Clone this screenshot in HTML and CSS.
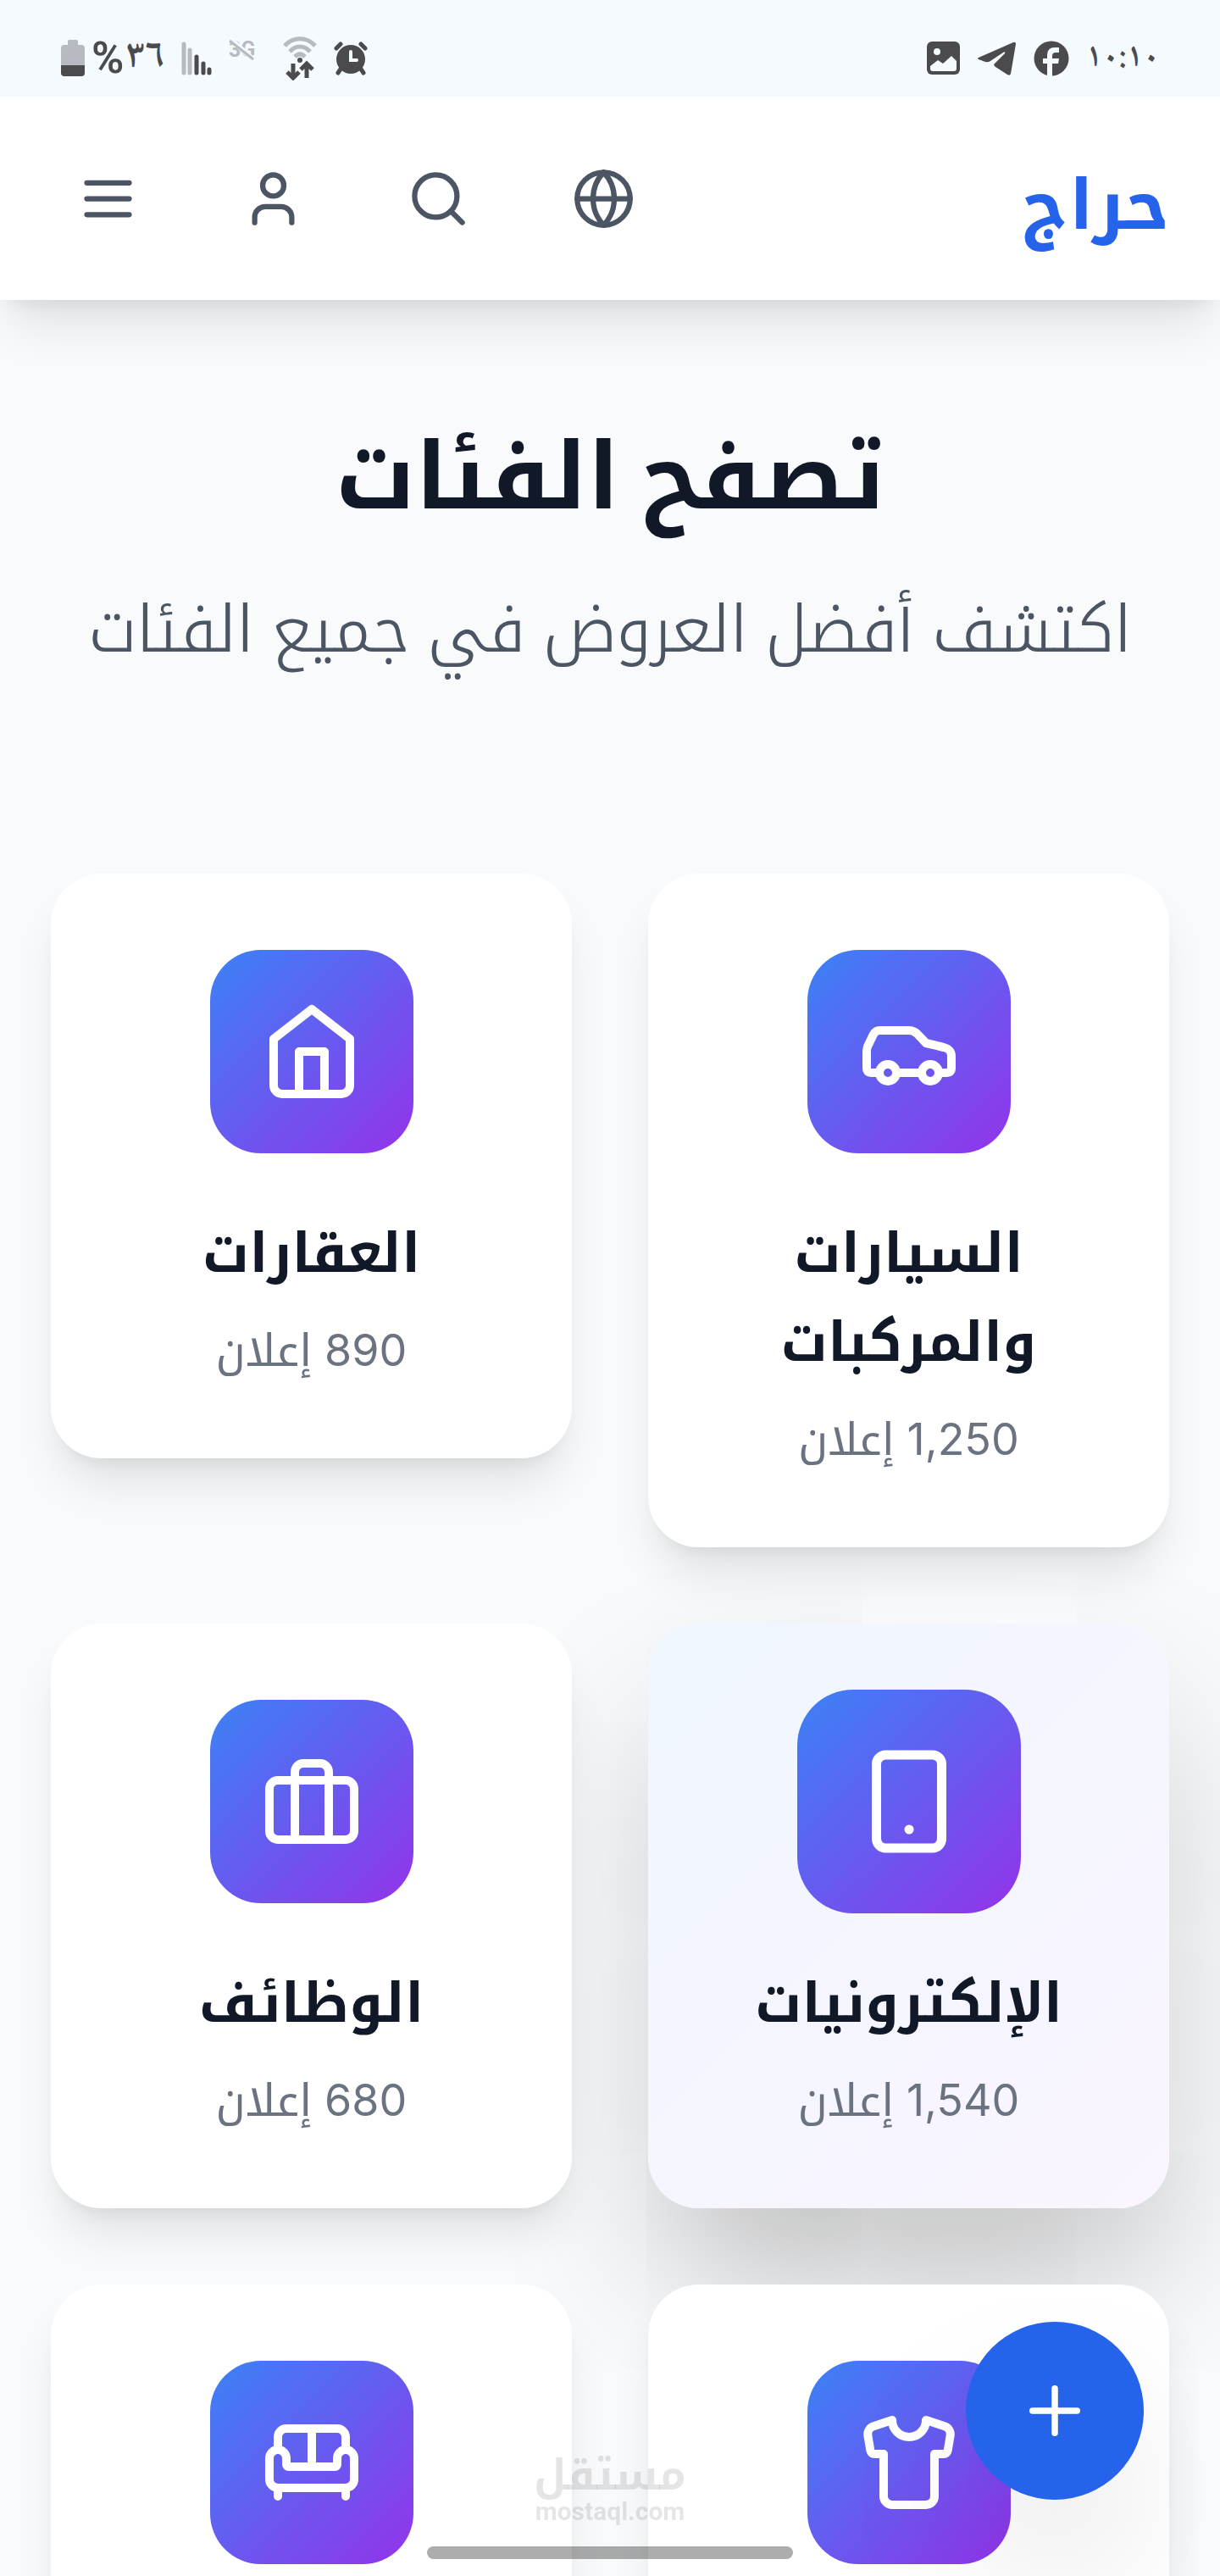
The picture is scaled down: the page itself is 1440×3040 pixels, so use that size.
FILE: index.html
```html
<!DOCTYPE html>
<html lang="ar" dir="rtl">
<head>
<meta charset="utf-8">
<meta name="viewport" content="width=device-width, initial-scale=1">
<title>حراج</title>
<link rel="stylesheet" href="styles.css">
</head>
<body>
<div class="status" dir="ltr">
  <div class="status-group">
    <svg width="28" height="44" viewBox="0 0 28 44"><path fill="#b7bac0" d="M8 2a2 2 0 0 1 2-2h8a2 2 0 0 1 2 2v4h4a4 4 0 0 1 4 4v20H0V10a4 4 0 0 1 4-4h4z"/><path fill="#4b4b4d" d="M0 30h28v9a4 4 0 0 1-4 4H4a4 4 0 0 1-4-4z"/></svg>
    <span class="status-text percent"><span>%</span><span class="digits">٣٦</span></span>
    <svg class="signal" width="36" height="40" viewBox="0 0 36 40" fill="none" stroke-width="5" stroke-linecap="round"><path stroke="#b7bac0" d="M3 3v34M10 10v27"/><path stroke="#4b4b4d" d="M18 18v19M26 26v11M33 33v4"/></svg>
    <svg class="net" width="36" height="56" viewBox="0 0 36 56"><text class="net-label" x="0" y="26">3G</text><path d="M3 6l27 24" stroke="#f5fafe" stroke-width="6"/><path d="M1 7l28 22" stroke="#b7bac0" stroke-width="3"/></svg>
    <svg class="wifi" width="40" height="52" viewBox="0 0 40 52" fill="none"><path stroke="#b7bac0" stroke-width="5" d="M2 11c10-11 26-11 36 0M8 18c7-8 17-8 24 0M14 24c4-4 8-4 12 0"/><circle cx="20" cy="28" r="3" fill="#4b4b4d"/><path stroke="#4b4b4d" stroke-width="5" d="M12 32v16M5 42l7 7 7-7M28 49V33M21 39l7-7 7 7"/></svg>
    <svg width="40" height="40" viewBox="0 0 40 40" fill="none" stroke="#4b4b4d" stroke-width="5" stroke-linecap="round"><circle cx="20" cy="21" r="17" fill="#4b4b4d" stroke="none"/><path d="M3 8l5-5M32 3l5 5M9 31l-4 6M31 31l4 6"/><path stroke="#f5fafe" stroke-width="4" d="M20 12v10h7"/></svg>
  </div>
  <div class="status-group apps">
    <svg width="40" height="40" viewBox="0 0 40 40"><rect width="39" height="39" rx="6" fill="#4b4b4d"/><circle cx="12" cy="12" r="4" fill="#f5fafe"/><path fill="#f5fafe" d="M4 29l9-7 6 4 10-9 6 6v9a3 3 0 0 1-3 3H7a3 3 0 0 1-3-3z"/></svg>
    <svg width="46" height="42" viewBox="0 0 46 42"><path fill="#4b4b4d" d="M1 20 42 2q3-1 3 2l-6 35q-1 3-4 1L21 31q-3-2-1-4l12-12q1-3-2-1L15 24q-3 2-6 1l-8-3q-2-1 0-2z"/></svg>
    <svg width="42" height="42" viewBox="0 0 42 42"><circle cx="21" cy="21" r="20.500" fill="#4b4b4d"/><path fill="#f5fafe" d="M16 42V27h-5v-6h5v-4q0-9 9-9h5v6h-4q-4 0-4 4v3h8l-1 6h-7v15z"/></svg>
    <span class="status-text digits time">١٠:١٠</span>
  </div>
</div>

<header class="header">
  <a class="logo" href="#">حراج</a>
  <nav class="actions">
    <button class="icon-btn" aria-label="اللغة"><svg class="icon" viewBox="0 0 24 24"><circle cx="12" cy="12" r="10"/><path d="M12 2a14.500 14.500 0 0 0 0 20 14.500 14.500 0 0 0 0-20M2 12h20"/></svg></button>
    <button class="icon-btn" aria-label="بحث"><svg class="icon" viewBox="0 0 24 24"><circle cx="11" cy="11" r="8"/><path d="m21 21-4.300-4.300"/></svg></button>
    <button class="icon-btn" aria-label="الحساب"><svg class="icon" viewBox="0 0 24 24"><path d="M19 21v-2a4 4 0 0 0-4-4H9a4 4 0 0 0-4 4v2"/><circle cx="12" cy="7" r="4"/></svg></button>
    <button class="icon-btn" aria-label="القائمة"><svg class="icon" viewBox="0 0 24 24"><path d="M4 6h16M4 12h16M4 18h16"/></svg></button>
  </nav>
</header>

<main class="main">
  <section class="hero">
    <h1 class="hero-title">تصفح الفئات</h1>
    <p class="hero-sub">اكتشف أفضل العروض في جميع الفئات</p>
  </section>
  <section class="grid">
    <a class="card" href="#">
      <span class="tile"><svg class="icon" viewBox="0 0 24 24"><path d="M19 17h2c.6 0 1-.4 1-1v-3c0-.9-.7-1.700-1.500-1.900C18.700 10.600 16 10 16 10s-1.300-1.400-2.200-2.300c-.5-.4-1.100-.7-1.800-.7H5c-.6 0-1.100.4-1.400.9l-1.400 2.900A3.700 3.700 0 0 0 2 12v4c0 .6.4 1 1 1h2"/><circle cx="7" cy="17" r="2"/><path d="M9 17h6"/><circle cx="17" cy="17" r="2"/></svg></span>
      <h3 class="card-title">السيارات والمركبات</h3>
      <p class="card-count">1,250 إعلان</p>
    </a>
    <a class="card" href="#">
      <span class="tile"><svg class="icon" viewBox="0 0 24 24"><path d="m3 9 9-7 9 7v11a2 2 0 0 1-2 2H5a2 2 0 0 1-2-2z"/><path d="M9 22V12h6v10"/></svg></span>
      <h3 class="card-title">العقارات</h3>
      <p class="card-count">890 إعلان</p>
    </a>
    <a class="card active" href="#">
      <span class="tile"><svg class="icon" viewBox="0 0 24 24"><rect x="5" y="2" width="14" height="20" rx="2"/><path d="M12 18h.01"/></svg></span>
      <h3 class="card-title">الإلكترونيات</h3>
      <p class="card-count">1,540 إعلان</p>
    </a>
    <a class="card" href="#">
      <span class="tile"><svg class="icon" viewBox="0 0 24 24"><path d="M16 21V5a2 2 0 0 0-2-2h-4a2 2 0 0 0-2 2v16"/><rect x="2" y="7" width="20" height="14" rx="2"/></svg></span>
      <h3 class="card-title">الوظائف</h3>
      <p class="card-count">680 إعلان</p>
    </a>
    <a class="card" href="#" aria-label="الأزياء">
      <span class="tile"><svg class="icon" viewBox="0 0 24 24"><path d="M20.380 3.460 16 2a4 4 0 0 1-8 0L3.620 3.460a2 2 0 0 0-1.340 2.230l.58 3.470a1 1 0 0 0 .99.84H6v10c0 1.100.9 2 2 2h8a2 2 0 0 0 2-2V10h2.150a1 1 0 0 0 .99-.84l.58-3.470a2 2 0 0 0-1.340-2.230z"/></svg></span>
    </a>
    <a class="card" href="#" aria-label="الأثاث">
      <span class="tile"><svg class="icon" viewBox="0 0 24 24"><path d="M20 9V6a2 2 0 0 0-2-2H6a2 2 0 0 0-2 2v3"/><path d="M2 16a2 2 0 0 0 2 2h16a2 2 0 0 0 2-2v-5a2 2 0 0 0-4 0v1.500a.5.5 0 0 1-.5.5h-11a.5.5 0 0 1-.5-.5V11a2 2 0 0 0-4 0z"/><path d="M4 18v2M20 18v2M12 4v9"/></svg></span>
    </a>
  </section>
</main>

<button class="fab" aria-label="إضافة إعلان"><svg class="icon" viewBox="0 0 24 24"><path d="M5 12h14M12 5v14"/></svg></button>
<div class="watermark"><span class="mark-ar">مستقل</span><span class="mark-en">mostaql.com</span></div>
<div class="home-bar"></div>
</body>
</html>
```
FILE: styles.css
```css
* { box-sizing: border-box; margin: 0; padding: 0; }

body {
  display: flex;
  flex-direction: column;
  height: 100vh;
  overflow: hidden;
  background: #f9fafb;
  color: #111827;
  font-family: Inter, "Noto Kufi Arabic", "DejaVu Sans", sans-serif;
}

a { color: inherit; text-decoration: none; }
svg { display: block; flex: none; }
button { border: 0; background: none; font: inherit; cursor: pointer; }

.icon {
  fill: none;
  stroke: currentColor;
  stroke-width: 2;
  stroke-linecap: round;
  stroke-linejoin: round;
}

/* Phone status bar */
.status {
  display: flex;
  justify-content: space-between;
  flex: none;
  height: 114px;
  padding: 24px 72px 0;
  background: #f5fafe;
}
.status-group { display: flex; align-items: center; height: 90px; }
.status-text {
  color: #4b4b4d;
  font-family: Roboto, sans-serif;
  font-weight: 600;
  font-size: 52px;
  line-height: 60px;
}
.digits {
  font-family: "Noto Naskh Arabic", "Noto Sans Arabic", "DejaVu Sans", sans-serif;
  font-size: 48px;
}
.percent { display: flex; gap: 2px; margin-left: 8px; }
.signal { margin-left: 20px; }
.net { margin-left: 20px; }
.net-label { fill: #b7bac0; font: 700 25px Roboto, sans-serif; }
.wifi { margin: 0 20px 0 28px; }
.apps { gap: 20px; }
.time { font-size: 40px; }

/* Site header */
.header {
  position: relative;
  z-index: 2;
  display: flex;
  justify-content: space-between;
  align-items: center;
  flex: none;
  height: 240px;
  padding: 0 60px;
  background: #fff;
  box-shadow: 0 38px 56px -11px rgba(0, 0, 0, .1), 0 15px 22px -15px rgba(0, 0, 0, .1);
}
.logo { padding-top: 14px; color: #2563eb; font-weight: 700; font-size: 82px; line-height: 120px; }
.actions { display: flex; gap: 60px; }
.icon-btn { padding: 30px; color: #4b5563; }
.icon-btn .icon { width: 75px; height: 75px; }

/* Categories */
.main { flex: 1; min-height: 0; padding: 120px 60px; overflow: hidden; }
.hero { padding-top: 18px; text-align: center; }
.hero-title { font-weight: 700; font-size: 109px; line-height: 136px; }
.hero-sub { margin-top: 60px; color: #4b5563; font-weight: 300; font-size: 76px; line-height: 106px; }
.grid {
  display: grid;
  grid-template-columns: 1fr 1fr;
  align-items: start;
  gap: 90px;
  margin-top: 237px;
}
.card {
  display: flex;
  flex-direction: column;
  align-items: center;
  min-height: 690px;
  padding: 90px;
  border-radius: 60px;
  background: #fff;
  text-align: center;
  box-shadow: 0 38px 56px -11px rgba(0, 0, 0, .1), 0 15px 22px -15px rgba(0, 0, 0, .1);
}
.tile {
  display: grid;
  place-items: center;
  width: 240px;
  height: 240px;
  margin-bottom: 64px;
  border-radius: 60px;
  background: linear-gradient(135deg, #3b82f6, #9333ea);
  color: #fff;
}
.tile .icon { width: 120px; height: 120px; }
.card-title { font-weight: 700; font-size: 64px; line-height: 105px; }
.card-count { margin-top: 26px; color: #6b7280; font-weight: 400; font-size: 52px; line-height: 75px; }
.active {
  background: linear-gradient(135deg, #eff6ff, #faf5ff);
  box-shadow: 0 94px 188px -20px rgba(0, 0, 0, .25);
}
.active .tile { transform: scale(1.1); }

/* Overlays */
.fab {
  position: fixed;
  right: 90px;
  bottom: 90px;
  z-index: 3;
  display: grid;
  place-items: center;
  width: 210px;
  height: 210px;
  border-radius: 50%;
  background: #2563eb;
  color: #fff;
  box-shadow: 0 94px 188px -45px rgba(0, 0, 0, .25);
}
.fab .icon { width: 90px; height: 90px; }
.watermark {
  position: fixed;
  right: 0;
  bottom: 58px;
  left: 0;
  z-index: 3;
  display: flex;
  flex-direction: column;
  align-items: center;
  color: rgba(0, 0, 0, .1);
  font-weight: 700;
}
.mark-ar { font-size: 50px; line-height: 52px; }
.mark-en { font-family: Roboto, sans-serif; font-size: 30px; line-height: 36px; }
.home-bar {
  position: fixed;
  right: 35%;
  bottom: 20px;
  left: 35%;
  z-index: 3;
  height: 15px;
  border-radius: 8px;
  background: rgba(0, 0, 0, .32);
}
```
